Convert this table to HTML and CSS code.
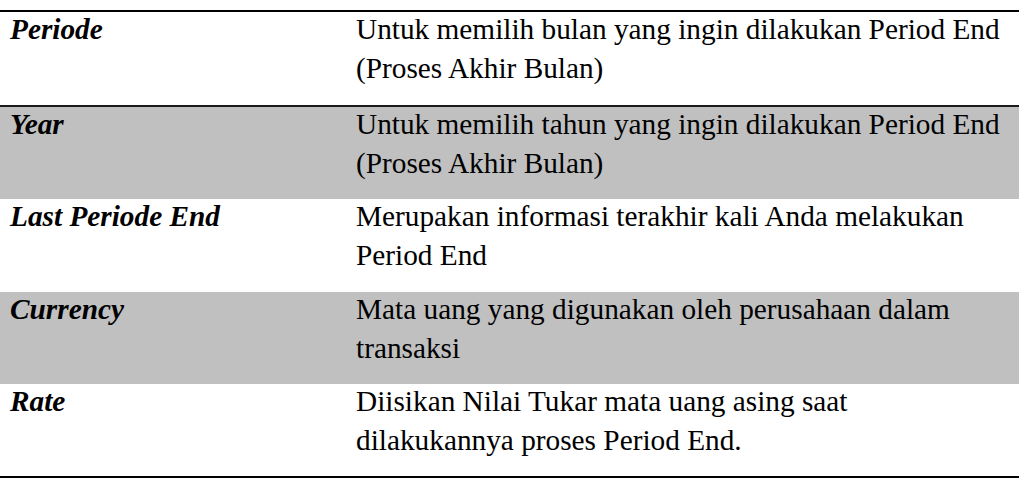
FILE: index.html
```html
<!DOCTYPE html>
<html lang="id">
<head>
<meta charset="utf-8">
<title>Period End</title>
<link rel="stylesheet" href="styles.css">
</head>
<body>
<div class="spec">
  <div class="row row-first">
    <div class="term">Periode</div>
    <div class="desc">Untuk memilih bulan yang ingin dilakukan Period End (Proses Akhir Bulan)</div>
  </div>
  <div class="row row-shade row-split">
    <div class="term">Year</div>
    <div class="desc">Untuk memilih tahun yang ingin dilakukan Period End (Proses Akhir Bulan)</div>
  </div>
  <div class="row row-tall">
    <div class="term">Last Periode End</div>
    <div class="desc">Merupakan informasi terakhir kali Anda melakukan Period End</div>
  </div>
  <div class="row row-shade">
    <div class="term">Currency</div>
    <div class="desc">Mata uang yang digunakan oleh perusahaan dalam transaksi</div>
  </div>
  <div class="row row-last">
    <div class="term">Rate</div>
    <div class="desc">Diisikan Nilai Tukar mata uang asing saat dilakukannya proses Period End.</div>
  </div>
</div>
</body>
</html>
```

FILE: styles.css
```css
html, body {
  margin: 0;
  padding: 0;
  background: #ffffff;
}

body {
  font-family: "Liberation Serif", "Times New Roman", serif;
  font-size: 29.3px;
  line-height: 39px;
  color: #000000;
}

.spec {
  width: 1019px;
  margin-top: 10px;
  border-top: 2px solid #000000;
  border-bottom: 2px solid #000000;
  display: flex;
  flex-direction: column;
}

.row {
  display: grid;
  grid-template-columns: 346px 1fr;
  height: 92px;
  box-sizing: border-box;
  overflow: hidden;
}

.row-first {
  height: 93px;
}

.row-tall {
  height: 93px;
}

.row-shade {
  background: #c0c0c0;
}

.row-split {
  border-top: 2px solid #1a1a1a;
  height: 94px;
}

.term,
.desc {
  margin-top: -2px;
  padding-left: 10px;
}

.term {
  font-weight: bold;
  font-style: italic;
}

.desc {
  padding-left: 10px;
  padding-right: 12px;
}
```
